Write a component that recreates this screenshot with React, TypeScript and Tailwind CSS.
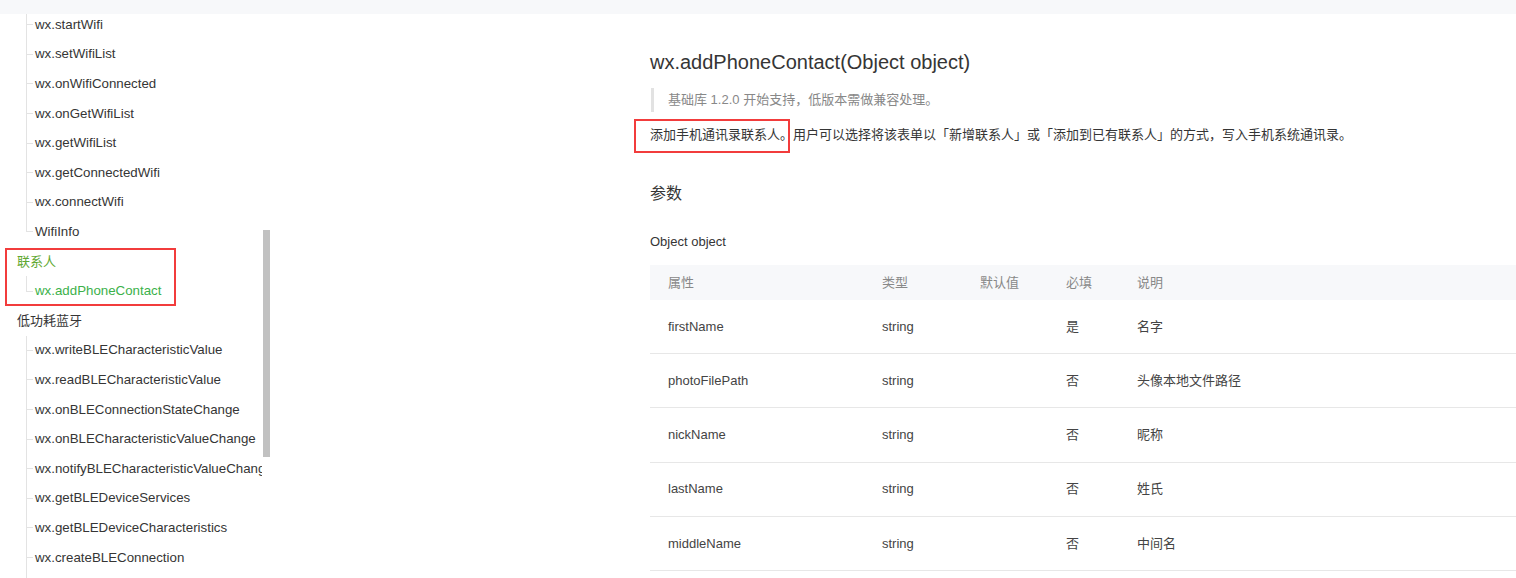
import React from 'react';

type NavRow =
  | { kind: 'group'; label: string; active?: boolean }
  | { kind: 'item'; label: string; last?: boolean; active?: boolean };

const NAV_ROWS: NavRow[] = [
  { kind: 'item', label: 'wx.startWifi' },
  { kind: 'item', label: 'wx.setWifiList' },
  { kind: 'item', label: 'wx.onWifiConnected' },
  { kind: 'item', label: 'wx.onGetWifiList' },
  { kind: 'item', label: 'wx.getWifiList' },
  { kind: 'item', label: 'wx.getConnectedWifi' },
  { kind: 'item', label: 'wx.connectWifi' },
  { kind: 'item', label: 'WifiInfo', last: true },
  { kind: 'group', label: '联系人', active: true },
  { kind: 'item', label: 'wx.addPhoneContact', last: true, active: true },
  { kind: 'group', label: '低功耗蓝牙' },
  { kind: 'item', label: 'wx.writeBLECharacteristicValue' },
  { kind: 'item', label: 'wx.readBLECharacteristicValue' },
  { kind: 'item', label: 'wx.onBLEConnectionStateChange' },
  { kind: 'item', label: 'wx.onBLECharacteristicValueChange' },
  { kind: 'item', label: 'wx.notifyBLECharacteristicValueChange' },
  { kind: 'item', label: 'wx.getBLEDeviceServices' },
  { kind: 'item', label: 'wx.getBLEDeviceCharacteristics' },
  { kind: 'item', label: 'wx.createBLEConnection' },
  { kind: 'item', label: 'wx.closeBLEConnection' },
];

const PARAMS = [
  { name: 'firstName', type: 'string', def: '', required: '是', desc: '名字' },
  { name: 'photoFilePath', type: 'string', def: '', required: '否', desc: '头像本地文件路径' },
  { name: 'nickName', type: 'string', def: '', required: '否', desc: '昵称' },
  { name: 'lastName', type: 'string', def: '', required: '否', desc: '姓氏' },
  { name: 'middleName', type: 'string', def: '', required: '否', desc: '中间名' },
];

const FONT = 'font-["Liberation_Sans","Noto_Sans_CJK_SC",sans-serif]';

const SidebarRow = ({ row }: { row: NavRow }) => {
  if (row.kind === 'group') {
    return (
      <div
        className={`h-[29.6px] flex items-center pl-[17px] text-[13px] whitespace-nowrap ${row.active ? 'text-[#5fa832]' : 'text-[#353535]'}`}
      >
        {row.label}
      </div>
    );
  }
  return (
    <div className="h-[29.6px] flex pl-[26px]">
      {/* tree connector */}
      <div className="w-[7px] flex flex-col shrink-0">
        <div className="flex-1 border-l border-b border-[#e3e3e3]" />
        <div className={`flex-1 ${row.last ? '' : 'border-l border-[#e3e3e3]'}`} />
      </div>
      <div
        className={`flex items-center pl-[2px] text-[13.3px] whitespace-nowrap ${row.active ? 'text-[#3bb14a]' : 'text-[#353535]'}`}
      >
        {row.label}
      </div>
    </div>
  );
};

const App = () => {
  return (
    <div className={`w-[1516px] h-[578px] overflow-hidden bg-white ${FONT}`}>
      <div className="relative z-10 h-[14px] bg-[#f7f8fa]" />

      <div className="flex">
        {/* Sidebar */}
        <div className="relative w-[270px] shrink-0 flex">
          <div className="w-[263px] overflow-hidden -mt-[4px]">
            {NAV_ROWS.map((row) => (
              <SidebarRow key={row.label} row={row} />
            ))}
          </div>
          <div className="w-[7px] ml-[1px]">
            <div className="mt-[216px] h-[227px] bg-[#c1c1c1]" />
          </div>
          {/* annotation */}
          <div className="absolute left-[5px] top-[234px] w-[171px] h-[58px] border-2 border-[#f23c3c]" />
        </div>

        {/* Main */}
        <div className="relative pl-[380px] flex-1 text-[#353535]">
          <h1 className="mt-[34px] text-[20px] leading-[28px] font-normal">wx.addPhoneContact(Object object)</h1>

          <div className="mt-[12px] h-[24px] border-l-[3px] border-[#e2e2e2] ml-[1px] pl-[14px] flex items-center text-[13px] text-[#888]">
            基础库 1.2.0 开始支持，低版本需做兼容处理。
          </div>

          <p className="mt-[12px] text-[13px] leading-[22px]">
            添加手机通讯录联系人。用户可以选择将该表单以「新增联系人」或「添加到已有联系人」的方式，写入手机系统通讯录。
          </p>

          <h2 className="mt-[36px] text-[16px] leading-[24px] font-normal">参数</h2>

          <div className="mt-[26px] text-[13px] leading-[20px]">Object object</div>

          <div className="mt-[13px] text-[13px]">
            <div className="h-[35px] bg-[#f7f8fa] flex items-center text-[#888]">
              <div className="w-[214px] pl-[18px]">属性</div>
              <div className="w-[98px] pl-[18px]">类型</div>
              <div className="w-[86px] pl-[18px]">默认值</div>
              <div className="w-[71px] pl-[18px]">必填</div>
              <div className="flex-1 pl-[18px]">说明</div>
            </div>
            {PARAMS.map((p) => (
              <div key={p.name} className="h-[54.2px] border-b border-[#e7e7e7] flex items-center text-[#444]">
                <div className="w-[214px] pl-[18px]">{p.name}</div>
                <div className="w-[98px] pl-[18px]">{p.type}</div>
                <div className="w-[86px] pl-[18px]">{p.def}</div>
                <div className="w-[71px] pl-[18px]">{p.required}</div>
                <div className="flex-1 pl-[18px]">{p.desc}</div>
              </div>
            ))}
          </div>

          {/* annotation */}
          <div className="absolute left-[364px] top-[105px] w-[156px] h-[34px] border-2 border-[#f23c3c]" />
        </div>
      </div>
    </div>
  );
};

export default App;
